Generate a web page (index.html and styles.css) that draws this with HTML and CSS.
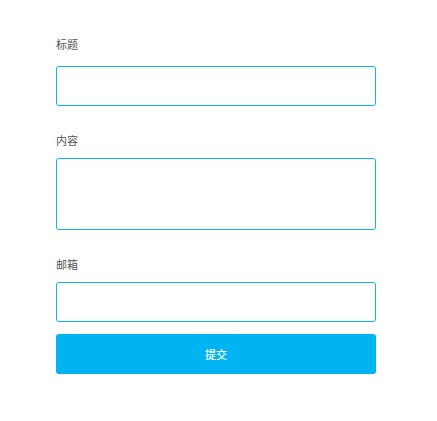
FILE: index.html
```html
<!DOCTYPE html>
<html lang="zh-CN">
<head>
  <meta charset="utf-8">
  <title>留言</title>
  <link rel="stylesheet" href="styles.css">
</head>
<body>
  <form class="msg-form">
    <div class="field field-first">
      <label class="field-label" for="title">标题</label>
      <input class="field-input" id="title" type="text">
    </div>

    <div class="field">
      <label class="field-label" for="content">内容</label>
      <textarea class="field-input field-area" id="content"></textarea>
    </div>

    <div class="field field-last">
      <label class="field-label" for="email">邮箱</label>
      <input class="field-input" id="email" type="text">
    </div>

    <button class="submit-btn" type="button">提交</button>
  </form>
</body>
</html>
```

FILE: styles.css
```css
body {margin: 0; background: #fff; font-family: "Noto Sans CJK SC", "Noto Sans", sans-serif;}

.msg-form {width: 320px; padding: 35px 0 0 56px; display: flex; flex-direction: column;}

.field {display: flex; flex-direction: column; margin-bottom: 25px;}
.field-last {margin-bottom: 12px;}

.field-label {font-size: 11px; line-height: 18px; height: 18px; color: #555; margin-bottom: 9px;}
.field-first .field-label {margin-bottom: 13px;}

.field-input {box-sizing: border-box; width: 320px; height: 40px; margin: 0; padding: 0 10px;
  border: 1px solid #10b2ee; border-radius: 3px; outline: none; background: #fff;
  font-family: inherit; font-size: 12px;}
.field-area {height: 72px; resize: none; display: block;}

.submit-btn {width: 320px; height: 40px; border: 0; border-radius: 3px; background: #00b4f1;
  color: #fff; font-family: inherit; font-size: 11px; font-weight: 500; cursor: pointer;}
```
